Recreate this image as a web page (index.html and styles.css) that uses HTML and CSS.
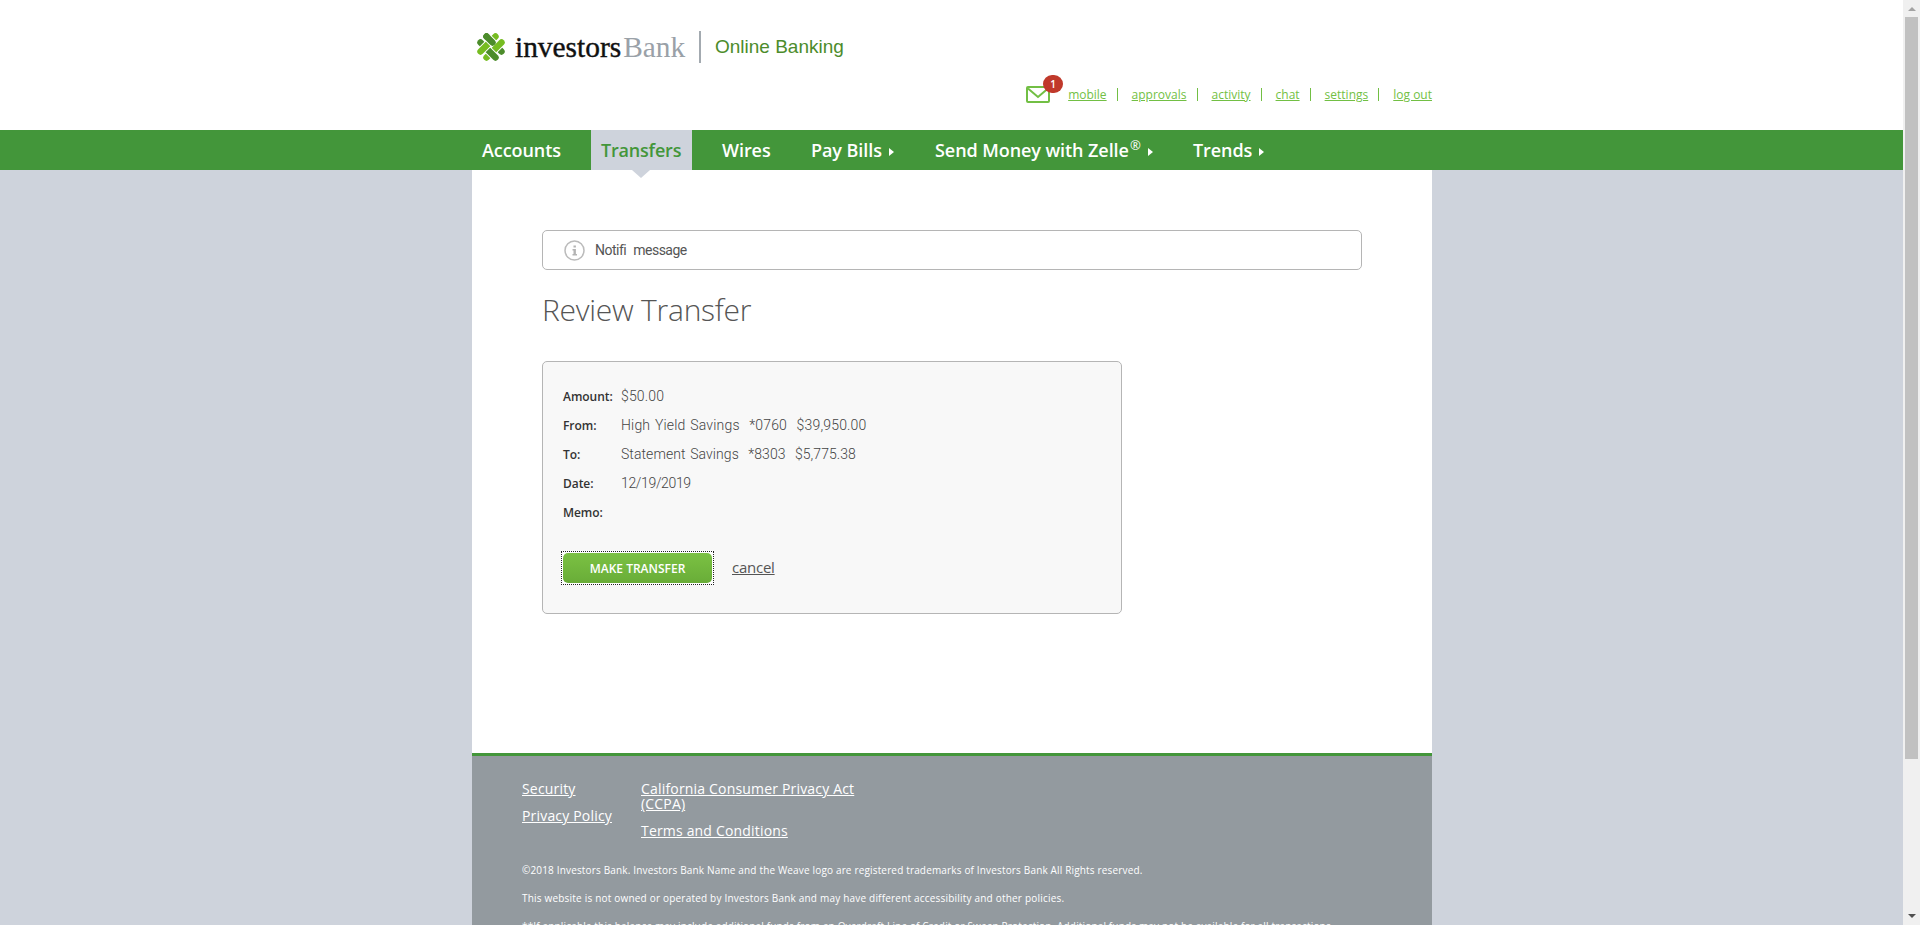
FILE: index.html
```html
<!DOCTYPE html>
<html lang="en">
<head>
<meta charset="utf-8">
<title>Investors Bank Online Banking</title>
<link rel="stylesheet" href="styles.css">
</head>
<body>
<div class="window">
<div class="page">
  <header class="header">
    <div class="brand">
      <svg class="logo-mark" width="28" height="28" viewBox="0 0 28 28" fill="none" stroke-width="6.4" stroke-linecap="round">
        <path d="M9.500 3.500 24.500 18.500" stroke="#4c8c2b"/>
        <path d="M22.500 11.500 11.500 22.500" stroke="#fff" stroke-width="8.200" stroke-linecap="butt"/>
        <path d="M24.500 9.500 9.500 24.500" stroke="#76bc21"/>
        <path d="M5.500 11.500 16.500 22.500" stroke="#fff" stroke-width="8.200" stroke-linecap="butt"/>
        <path d="M3.500 9.500 18.500 24.500" stroke="#4c8c2b"/>
        <path d="M16.500 5.500 5.500 16.500" stroke="#fff" stroke-width="8.200" stroke-linecap="butt"/>
        <path d="M18.500 3.500 3.500 18.500" stroke="#76bc21"/>
        <path d="M10.500 4.500 17 11" stroke="#fff" stroke-width="8.200" stroke-linecap="butt"/>
        <path d="M9.500 3.500 15.500 9.500" stroke="#4c8c2b"/>
      </svg>
      <span class="wordmark">investors<span class="wordmark-bank">Bank</span></span>
      <span class="brand-rule"></span>
      <span class="product">Online Banking</span>
    </div>
    <div class="utility">
      <a class="mail"><svg width="24" height="17" viewBox="0 0 24 17" fill="none" stroke="#72bf44" stroke-width="2"><rect x="1" y="1" width="22" height="15" rx="1"/><path d="M2 2.500 12 11 22 2.500"/></svg><span class="badge">1</span></a>
      <a>mobile</a><i></i><a>approvals</a><i></i><a>activity</a><i></i><a>chat</a><i></i><a>settings</a><i></i><a>log out</a>
    </div>
  </header>
  <nav class="nav"><div class="nav-inner">
    <a class="n1">Accounts</a><a class="n2 active">Transfers</a><a class="n3">Wires</a><a class="n4">Pay Bills</a><a class="n5">Send Money with Zelle<sup>®</sup></a><a class="n6">Trends</a>
  </div></nav>
  <main class="main">
    <div class="notice">
      <svg width="21" height="21" viewBox="0 0 21 21"><circle cx="10.5" cy="10.5" r="9.5" fill="none" stroke="#bbb" stroke-width="1.5"/><path d="M9.500 5.500h2.400v2H9.500zM8.500 9h3.400v5H13v1.500H8.500V14h1v-3.500h-1z" fill="#b4b4b4"/></svg>
      <span>Notifi message</span>
    </div>
    <h1 class="title">Review Transfer</h1>
    <section class="card">
      <dl class="details">
        <dt>Amount:</dt><dd>$50.00</dd>
        <dt>From:</dt><dd>High Yield Savings&nbsp; *0760&nbsp; $39,950.00</dd>
        <dt>To:</dt><dd class="to">Statement Savings&nbsp; *8303&nbsp; $5,775.38</dd>
        <dt>Date:</dt><dd class="date">12/19/2019</dd>
        <dt>Memo:</dt><dd></dd>
      </dl>
      <div class="actions"><span class="focus"><button class="submit">MAKE TRANSFER</button></span><a class="cancel">cancel</a></div>
    </section>
  </main>
  <footer class="footer">
    <div class="links">
      <ul class="col1"><li><a>Security</a></li><li><a>Privacy Policy</a></li></ul>
      <ul class="col2"><li><a>California Consumer Privacy Act (CCPA)</a></li><li><a>Terms and Conditions</a></li></ul>
    </div>
    <p>©2018 Investors Bank. Investors Bank Name and the Weave logo are registered trademarks of Investors Bank All Rights reserved.</p>
    <p class="p2">This website is not owned or operated by Investors Bank and may have different accessibility and other policies.</p>
    <p>**If applicable this balance may include additional funds from an Overdraft Line of Credit or Sweep Protection. Additional funds may not be available for all transactions.</p>
  </footer>
</div>
<div class="scrollbar"><span class="up"></span><span class="thumb"></span><span class="down"></span></div>
</div>
</body>
</html>
```
FILE: styles.css
```css
* { box-sizing: border-box; }
body { margin: 0; font-family: "Open Sans", sans-serif; color: #555; }
.window { display: flex; width: 1920px; height: 925px; overflow: hidden; }
.page { width: 1903px; height: 925px; overflow: hidden; background: #ced3dc; display: flex; flex-direction: column; }
.header { height: 130px; flex: none; background: #fff; padding: 30px 471px 0 472px; }
.brand { display: flex; height: 34px; padding-left: 5px; align-items: center; }
.logo-mark { flex: none; }
.wordmark { margin-left: 10px; width: 173px; font: 29.4px/32px "Liberation Serif", serif; color: #111; white-space: nowrap; -webkit-text-stroke: .4px #111; }
.wordmark-bank { color: #9aa1a8; -webkit-text-stroke: 0; margin-left: 2px; }
.brand-rule { width: 2px; height: 32px; margin-left: 11px; background: #a3aab0; }
.product { margin-left: 14px; font: 19px "Liberation Sans", sans-serif; color: #4c8c2b; white-space: nowrap; }
.utility { display: flex; height: 40px; padding-top: 21px; justify-content: flex-end; align-items: center; font-size: 12px; color: #72bf44; white-space: nowrap; }
.utility > a { text-decoration: underline; }
.utility i { width: 1px; height: 13px; margin: 0 14px 0 10px; background: #72bf44; }
.mail { position: relative; width: 24px; height: 17px; margin-right: 18px; }
.mail svg { display: block; }
.badge { position: absolute; left: 17px; top: -11px; width: 20px; height: 18px; border-radius: 9px; background: #c0392b; color: #fff; font: 600 10px/18px "Open Sans", sans-serif; text-align: center; }
.nav { height: 40px; flex: none; background: #43963a; }
.nav-inner { display: flex; width: 960px; margin-left: 472px; height: 40px; font-weight: 600; font-size: 18px; letter-spacing: -.07px; line-height: 40px; color: #fff; white-space: nowrap; }
.nav a { flex: none; }
.n1 { width: 119px; padding-left: 10px; }
.n2 { width: 101px; padding-left: 10px; margin-right: 30px; letter-spacing: -.2px; }
.n3 { width: 89px; }
.n4 { width: 124px; }
.n5 { width: 258px; }
.active { position: relative; background: #ced3dc; color: #43963a; z-index: 1; }
.active::after { content: ""; position: absolute; left: 41px; top: 40px; border: 9px solid transparent; border-top: 8px solid #ced3dc; border-bottom: 0; }
.n4::after, .n5::after, .n6::after { content: ""; display: inline-block; margin-left: 7px; border: 4px solid transparent; border-left: 5px solid #fff; border-right: 0; vertical-align: 1px; }
.nav sup { font-size: 13px; line-height: 0; font-weight: 400; vertical-align: 7px; margin-left: 1px; }
.main { width: 960px; height: 583px; flex: none; margin-left: 472px; background: #fff; padding: 60px 70px 0; }
.notice { display: flex; align-items: center; height: 40px; border: 1px solid #b5b5b5; border-radius: 5px; padding-left: 21px; font: 14px Roboto, sans-serif; letter-spacing: -.5px; word-spacing: 4px; }
.notice span { margin-left: 10px; }
.title { margin: 19px 0 0; font-size: 30px; line-height: 42px; font-weight: 300; letter-spacing: -.25px; color: #555; height: 72px; }
.card { width: 580px; height: 253px; background: #f8f8f8; border: 1px solid #b5b5b5; border-radius: 5px; padding: 20px; }
.details { display: grid; grid-template-columns: 58px 1fr; grid-auto-rows: 29px; margin: 0; line-height: 29px; white-space: nowrap; }
dt { font-size: 12px; font-weight: 600; letter-spacing: -.05px; color: #333; }
dd { margin: 0; font-family: Roboto, sans-serif; font-weight: 300; font-size: 14px; letter-spacing: .17px; word-spacing: 1.2px; color: #444; }
.to { letter-spacing: .07px; }
.date { letter-spacing: -.35px; }
.actions { display: flex; align-items: center; margin-top: 24px; height: 34px; }
.focus { display: block; width: 153px; height: 34px; padding: 1px; margin-left: -2px; border: 1px dotted #222; background: #fff; }
.submit { display: block; width: 149px; height: 30px; border: 0; border-radius: 5px; background: linear-gradient(#7bc143, #69ad38); color: #fff; font: 600 12px "Open Sans", sans-serif; padding: 0; white-space: nowrap; }
.cancel { margin-left: 18px; margin-top: -2px; font-size: 15px; letter-spacing: -.25px; text-decoration: underline; }
.footer { width: 960px; height: 172px; flex: none; margin-left: 472px; background: #939a9f; border-top: 3px solid #43963a; padding: 25px 50px 0; color: #fff; overflow: hidden; }
.links { display: flex; height: 79px; font-size: 14px; line-height: 15px; letter-spacing: .18px; }
.links ul { list-style: none; margin: 0; padding: 0; }
.links li { margin-bottom: 12px; }
.links a { text-decoration: underline; }
.col1 { width: 119px; }
.col2 { width: 220px; }
.footer p { margin: 0; height: 28px; font-size: 10px; line-height: 20px; letter-spacing: .16px; white-space: nowrap; }
.footer .p2 { letter-spacing: .2px; }
.scrollbar { width: 17px; height: 925px; background: #f0f0f0; display: flex; flex-direction: column; align-items: center; }
.up { margin-top: 7px; border: 4px solid transparent; border-bottom: 4px solid #a3a3a3; border-top: 0; }
.thumb { margin-top: 6px; width: 13px; height: 742px; background: #c1c1c1; }
.down { margin-top: 155px; border: 4px solid transparent; border-top: 4px solid #505050; border-bottom: 0; }
```
